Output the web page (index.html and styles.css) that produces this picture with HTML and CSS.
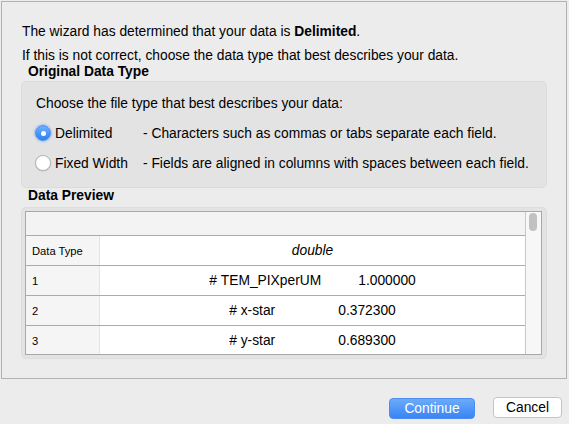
FILE: index.html
```html
<!DOCTYPE html>
<html>
<head>
<meta charset="utf-8">
<link rel="stylesheet" href="styles.css">
</head>
<body>
<div class="frame">
  <p class="intro">The wizard has determined that your data is <b>Delimited</b>.</p>
  <p class="intro second">If this is not correct, choose the data type that best describes your data.</p>
  <div class="section-title">Original Data Type</div>
  <div class="group type-group">
    <div class="choose">Choose the file type that best describes your data:</div>
    <div class="radio-row first-row">
      <span class="radio-label"><span class="radio checked"></span>Delimited</span>
      <span class="desc">- Characters such as commas or tabs separate each field.</span>
    </div>
    <div class="radio-row">
      <span class="radio-label"><span class="radio"></span>Fixed Width</span>
      <span class="desc">- Fields are aligned in columns with spaces between each field.</span>
    </div>
  </div>
  <div class="section-title preview-title">Data Preview</div>
  <div class="group preview-group">
    <div class="table">
      <div class="table-main">
        <div class="blank-row"></div>
        <div class="row">
          <div class="head-cell">Data Type</div>
          <div class="data-cell"><i>double</i></div>
        </div>
        <div class="row">
          <div class="head-cell">1</div>
          <div class="data-cell"><span>#&nbsp;TEM_PIXperUM</span><span class="val gap-a">1.000000</span></div>
        </div>
        <div class="row">
          <div class="head-cell">2</div>
          <div class="data-cell"><span>#&nbsp;x-star</span><span class="val gap-b">0.372300</span></div>
        </div>
        <div class="row">
          <div class="head-cell">3</div>
          <div class="data-cell"><span>#&nbsp;y-star</span><span class="val gap-b">0.689300</span></div>
        </div>
      </div>
      <div class="scroll-col"><div class="thumb"></div></div>
    </div>
  </div>
</div>
<div class="actions">
  <button class="btn primary">Continue</button>
  <button class="btn secondary">Cancel</button>
</div>
</body>
</html>
```
FILE: styles.css
```css
html, body {
  margin: 0;
  padding: 0;
}
body {
  width: 569px;
  height: 424px;
  overflow: hidden;
  background: #ececec;
  font-family: "Liberation Sans", Arial, sans-serif;
  font-size: 13.8px;
  color: #000;
}
.frame {
  box-sizing: border-box;
  margin: 1px 2px 0 1px;
  height: 378px;
  border: 1px solid #b2b2b2;
  padding: 22px 19px 0 19px;
}
.intro {
  margin: 0 0 0 1px;
  line-height: 16px;
}
.intro.second {
  margin-top: 8px;
}
.section-title {
  font-weight: bold;
  line-height: 16px;
  margin: 0 0 1px 7px;
}
.preview-title {
  margin-bottom: 3px;
}
.group {
  background: #e3e3e3;
  border: 1px solid #dcdcdc;
  border-radius: 5px;
}
.type-group {
  box-sizing: border-box;
  height: 107px;
  padding: 14px 14px 0 14px;
}
.choose {
  line-height: 16px;
}
.radio-row {
  display: flex;
  align-items: center;
  height: 20px;
  margin-top: 10px;
  margin-left: -1px;
}
.radio-row.first-row {
  margin-top: 11px;
}
.radio-label {
  display: flex;
  align-items: center;
  width: 108px;
  flex: none;
}
.radio {
  box-sizing: border-box;
  width: 16px;
  height: 16px;
  border-radius: 50%;
  margin-right: 4px;
  background: #fff;
  border: 1px solid #b4b4b4;
  box-shadow: 0 0.5px 1px rgba(0,0,0,0.15);
  position: relative;
}
.radio.checked {
  border: 1px solid #4a8ef2;
  background: linear-gradient(#6eb1fa, #2e7ff2);
  box-shadow: 0 0 2px 1px rgba(90,150,245,0.45);
}
.radio.checked::after {
  content: "";
  position: absolute;
  left: 4.5px;
  top: 4.5px;
  width: 5px;
  height: 5px;
  border-radius: 50%;
  background: #fff;
}
.preview-group {
  box-sizing: border-box;
  height: 152px;
  padding: 3px;
}
.table {
  display: flex;
  box-sizing: border-box;
  height: 144px;
  width: 517px;
  border: 1px solid #a8a8a8;
  background: #fff;
  overflow: hidden;
}
.table-main {
  flex: 1;
  display: flex;
  flex-direction: column;
}
.blank-row {
  height: 23px;
  flex: none;
  background: #f3f3f3;
}
.row {
  display: flex;
  height: 30px;
  flex: none;
  box-sizing: border-box;
  border-top: 1px solid #ababab;
}
.head-cell {
  box-sizing: border-box;
  width: 74px;
  flex: none;
  background: #f5f5f5;
  border-right: 1px solid #e4e4e4;
  font-size: 11.2px;
  padding-left: 6px;
  display: flex;
  align-items: center;
}
.data-cell {
  flex: 1;
  display: flex;
  align-items: center;
  justify-content: center;
}
.gap-a {
  margin-left: 37px;
}
.gap-b {
  margin-left: 63px;
}
.scroll-col {
  width: 15px;
  flex: none;
  background: #f7f7f7;
  border-left: 1px solid #c9c9c9;
}
.thumb {
  width: 8px;
  height: 18px;
  margin: 1px 0 0 3px;
  border-radius: 4px;
  background: #c1c1c1;
}
.actions {
  display: flex;
  justify-content: flex-end;
  align-items: flex-start;
  gap: 18px;
  padding-right: 7px;
  margin-top: 18px;
}
.btn {
  font-family: "Liberation Sans", Arial, sans-serif;
  font-size: 13.8px;
  height: 21px;
  border-radius: 4px;
  padding: 0;
  line-height: 19px;
}
.primary {
  width: 86px;
  margin-top: 1px;
  color: #fff;
  border: 1px solid #4b8cf3;
  background: linear-gradient(#6aabf9, #3a84f5);
}
.secondary {
  width: 69px;
  color: #000;
  background: #fff;
  border: 1px solid #c4c4c4;
}
```
